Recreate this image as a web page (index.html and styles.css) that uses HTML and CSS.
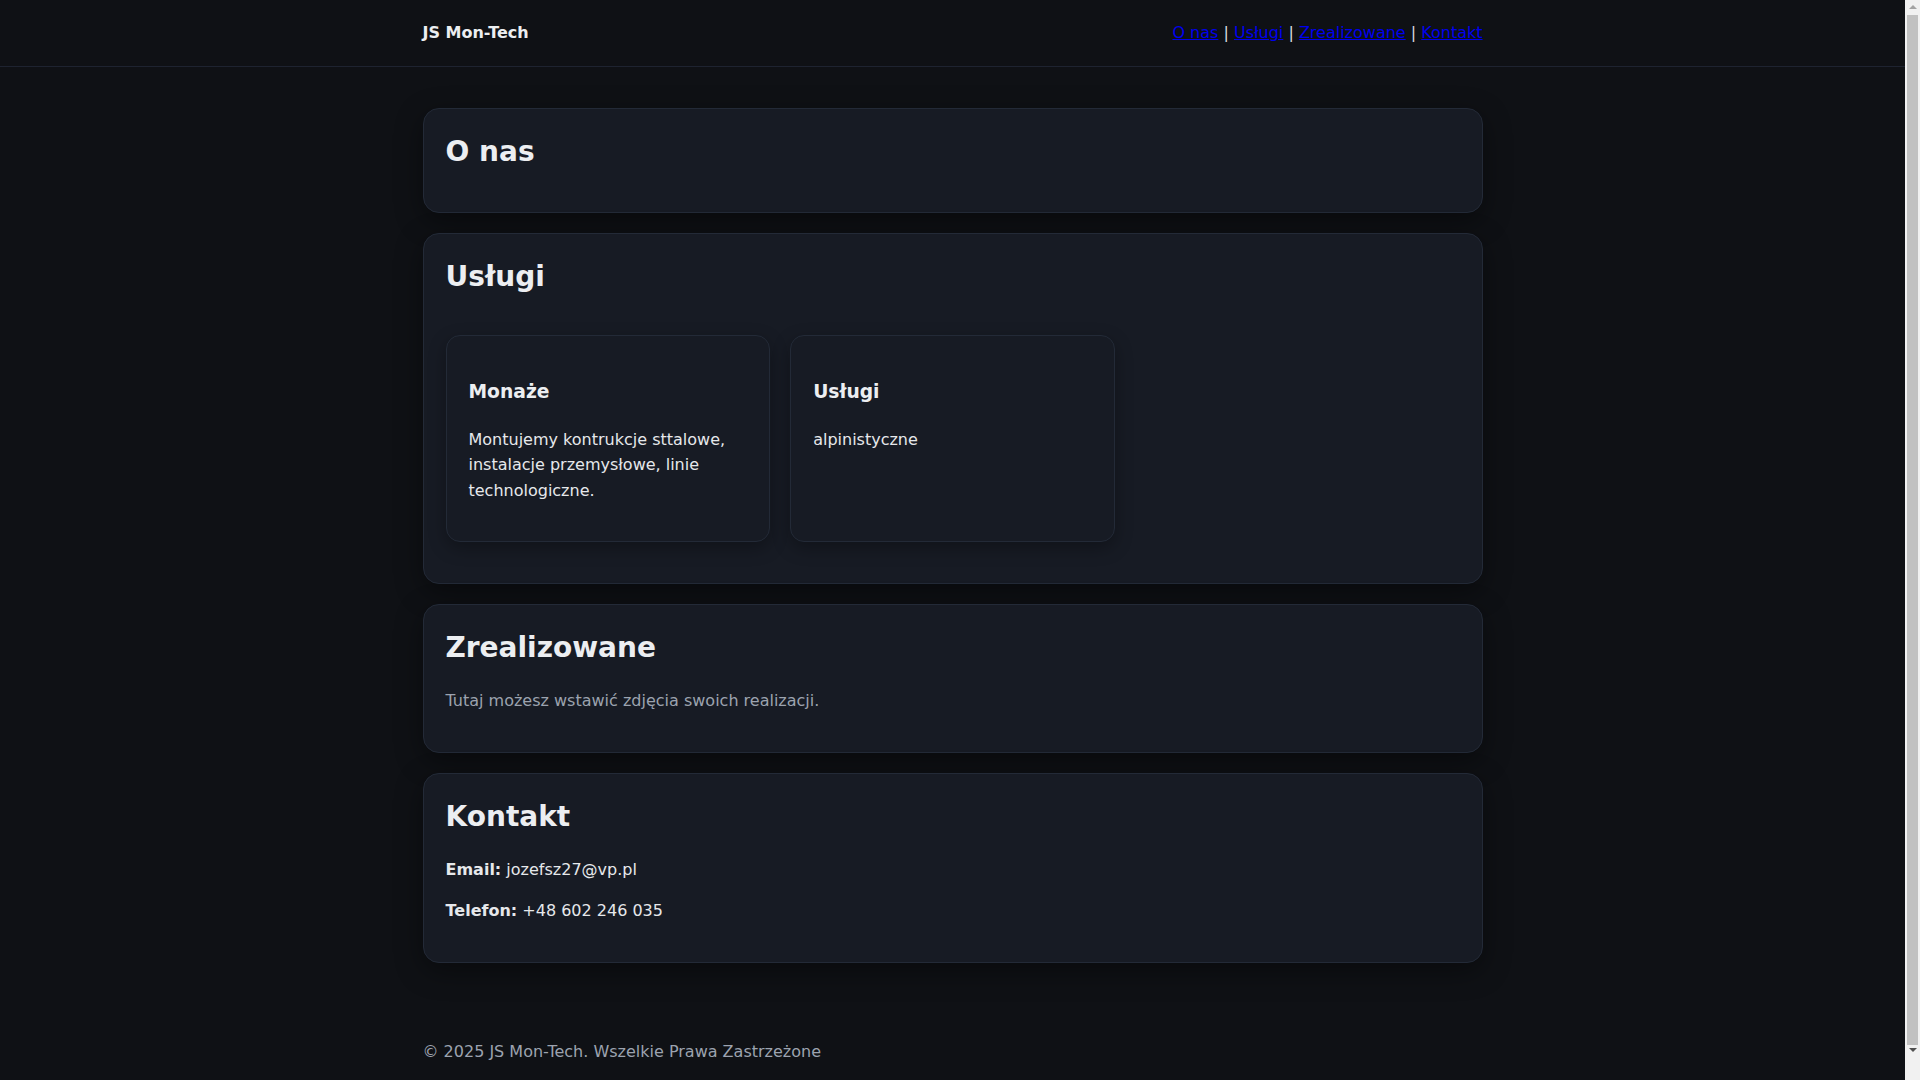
FILE: index.html
```html
<!DOCTYPE html>
<html lang="pl">
<head>
<meta charset="utf-8">
<title>JS Mon-Tech</title>
<link rel="stylesheet" href="styles.css">
</head>
<body>
<header class="site-header">
  <div class="header-inner">
    <div class="brand">JS Mon-Tech</div>
    <nav class="nav">
      <a href="#o-nas">O nas</a> <span class="sep">|</span> <a href="#uslugi">Usługi</a> <span class="sep">|</span> <a href="#zrealizowane">Zrealizowane</a> <span class="sep">|</span> <a href="#kontakt">Kontakt</a>
    </nav>
  </div>
</header>
<main class="main">
  <section class="card" id="o-nas">
    <h2>O nas</h2>
  </section>
  <section class="card" id="uslugi">
    <h2>Usługi</h2>
    <div class="services">
      <div class="service">
        <h3>Monaże</h3>
        <p>Montujemy kontrukcje sttalowe, instalacje przemysłowe, linie technologiczne.</p>
      </div>
      <div class="service">
        <h3>Usługi</h3>
        <p>alpinistyczne</p>
      </div>
    </div>
  </section>
  <section class="card" id="zrealizowane">
    <h2>Zrealizowane</h2>
    <p class="muted">Tutaj możesz wstawić zdjęcia swoich realizacji.</p>
  </section>
  <section class="card" id="kontakt">
    <h2>Kontakt</h2>
    <p><strong>Email:</strong> jozefsz27@vp.pl</p>
    <p><strong>Telefon:</strong> +48 602 246 035</p>
  </section>
</main>
<footer class="footer">
  <div class="footer-inner">© 2025 JS Mon-Tech. Wszelkie Prawa Zastrzeżone</div>
</footer>
<div class="scrollbar" aria-hidden="true">
  <div class="sb-btn sb-up"></div>
  <div class="sb-thumb"></div>
  <div class="sb-btn sb-down"></div>
</div>
</body>
</html>
```

FILE: styles.css
```css
html, body {
  margin: 0;
  padding: 0;
}
body {
  margin-right: 15px;
  background: #0f1115;
  color: #e6e8eb;
  font-family: "DejaVu Sans", sans-serif;
  font-size: 16px;
  line-height: 1.6;
}
html {
  background: #0f1115;
}
.site-header {
  border-bottom: 1px solid #1e2330;
}
.header-inner {
  max-width: 1060px;
  margin: 0 auto;
  padding: 20px 0;
  display: flex;
  justify-content: space-between;
  align-items: center;
}
.brand {
  font-weight: bold;
  font-size: 16px;
  color: #eceef1;
}
.nav {
  color: #d8dbe0;
}
.nav a {
  color: #0000ee;
  text-decoration: underline;
}
.main {
  max-width: 1060px;
  margin: 0 auto;
  padding: 41px 0 36px;
  display: flex;
  flex-direction: column;
  gap: 20px;
}
.card {
  background: #171b24;
  border: 1px solid #232a37;
  border-radius: 16px;
  padding: 21px 22px;
  box-shadow: 0 8px 28px rgba(0, 0, 0, 0.4);
}
.card h2 {
  font-size: 28px;
  line-height: 1.6;
  margin: 0 0 17px;
  color: #eceef1;
}
.card p {
  margin: 0 0 15px;
}
.card p:last-child {
  margin-bottom: 18px;
}
.muted {
  color: #9ca3af;
}
.services {
  display: grid;
  grid-template-columns: repeat(3, 1fr);
  gap: 20px;
  margin: 35px 0 20px;
}
.service {
  background: #171b24;
  border: 1px solid #232a37;
  border-radius: 14px;
  padding: 20px 22px;
  box-shadow: 0 6px 18px rgba(0, 0, 0, 0.3);
}
.service h3 {
  font-size: 18.72px;
  line-height: 1.6;
  margin: 21px 0 19.5px;
  color: #eceef1;
}
.card .service p {
  margin: 0 0 17.5px;
  color: #e6e8eb;
}
.footer {
  padding: 40px 0;
}
.footer-inner {
  max-width: 1060px;
  margin: 0 auto;
  color: #9ca3af;
}
.scrollbar {
  position: fixed;
  top: 0;
  right: 0;
  width: 15px;
  height: 100vh;
  background: #f1f1f1;
  display: flex;
  flex-direction: column;
  align-items: center;
}
.sb-btn {
  width: 15px;
  height: 15px;
  position: relative;
  flex: none;
}
.sb-btn::after {
  content: "";
  position: absolute;
  left: 3.5px;
  width: 0;
  height: 0;
  border-left: 4px solid transparent;
  border-right: 4px solid transparent;
}
.sb-up::after {
  top: 5px;
  border-bottom: 4px solid #a3a3a3;
}
.sb-down::after {
  top: 3px;
  border-top: 4px solid #505050;
}
.sb-thumb {
  width: 11px;
  height: 1030px;
  background: #c1c1c1;
  flex: none;
}
```
